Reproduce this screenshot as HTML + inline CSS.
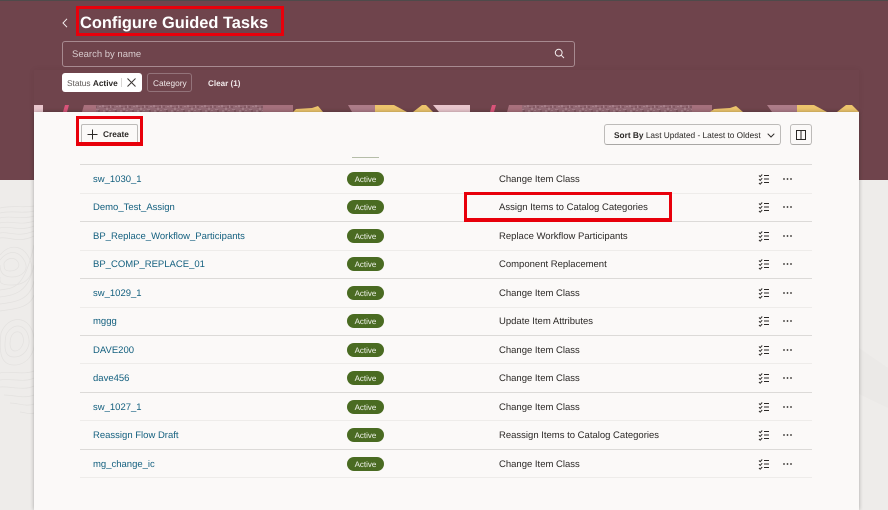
<!DOCTYPE html>
<html><head><meta charset="utf-8">
<style>
html,body{margin:0;padding:0;}
body{width:888px;height:510px;overflow:hidden;position:relative;background:#eeecea;font-family:"Liberation Sans",sans-serif;color:#2b2826;text-rendering:geometricPrecision;}
.a{position:absolute;white-space:nowrap;}
.hdr{left:0;top:0;width:888px;height:180px;background:#6f444c;}
.top{left:0;top:0;width:888px;height:1px;background:#4e4a4a;}
.card{left:34px;top:112px;width:825px;height:398px;background:#fbf9f8;box-shadow:0 0 4px rgba(0,0,0,.3);}
.shadow{left:34px;top:70px;width:825px;height:42px;box-shadow:0 0 6px rgba(60,20,30,.07);}
.line{left:80px;width:732px;height:1px;background:#eeecea;}
.line.d{background:#dcdad8;}
.n{left:93px;font-size:9.5px;color:#14607f;line-height:12px;}
.b{left:347px;width:37px;height:14px;border-radius:7px;background:#4a6b22;color:#f2f4ec;font-size:8px;line-height:15px;text-align:center;}
.t{left:499px;font-size:9.5px;line-height:14px;color:#2b2826;}
.red{border:3px solid #e8000b;box-sizing:border-box;}
svg{position:absolute;overflow:visible;}
</style></head><body>
<div class="a hdr"></div><div class="a top"></div>

<svg style="left:0;top:205px" width="34" height="220" viewBox="0 0 34 220" fill="none" stroke="#e3e1df" stroke-width=".7">
<path d="M0 3C12 0 24 3 34 1M0 8C12 5 24 9 34 6M0 13C10 10 22 15 34 11M0 18C10 15 20 21 34 16M0 23C8 20 20 27 34 21M0 28C8 26 18 33 34 26M0 33C8 31 18 39 34 31"/>
<path d="M0 55C8 45 18 45 24 55S22 72 12 72 0 66 0 60M0 50C10 38 24 40 30 55S26 80 12 80 0 76 0 72M4 58C8 52 15 52 18 57S16 66 10 66 4 63 4 58"/>
<path d="M0 85C12 83 24 86 34 40M0 92C12 90 28 90 34 60M0 99C14 97 30 96 34 76M0 106C14 104 30 103 34 90"/>
<path d="M6 130C12 118 24 118 28 130S24 152 14 152 4 142 6 130M11 132C14 125 21 125 23 132S20 146 15 146 9 139 11 132M1 128C8 110 28 110 33 128S28 160 14 160 -1 146 1 128"/>
<path d="M0 168C10 166 24 170 34 166M0 175C10 173 24 178 34 173M0 182C10 181 24 186 34 181M4 190C14 190 24 194 34 190M10 198C18 198 26 202 34 199M20 207C24 207 30 210 34 208"/>
</svg>
<svg style="left:859px;top:348px" width="29" height="60" viewBox="0 0 29 60"><path d="M0 0L29 20V60L0 46Z" fill="#ebe9e7"/></svg>

<div class="a shadow"></div>
<svg style="left:34px;top:105px" width="825" height="8" viewBox="0 0 825 8">
<defs>
<pattern id="nz" width="17" height="7" patternUnits="userSpaceOnUse">
<rect width="17" height="7" fill="#956a75"/>
<path d="M0 0h2v2H0zM4 3h2v2H4zM8 0h1v3H8zM11 4h3v1h-3zM14 1h2v1h-2zM1 5h2v2H1zM7 5h2v1H7z" fill="#a67f89"/>
<path d="M2 2h2v1H2zM6 1h2v2H6zM10 1h2v2h-2zM13 5h2v2h-2zM4 6h2v1H4z" fill="#835963"/>
</pattern>
</defs>
<path d="M0 0H9V7H0Z" fill="#e9c6cd"/>
<path d="M29 7L31 0H35L33 7Z" fill="#d9547a"/>
<path d="M48 7L50 0H64V7Z" fill="#a8707c"/>
<rect x="62" y="0" width="170" height="7" fill="url(#nz)"/>
<rect x="229" y="0" width="30" height="7" fill="#a5707c"/>
<path d="M259 7L262 4L278 3L284 1L289 7Z" fill="#ecc46c"/>
<path d="M314 0H341V7H318Z" fill="#ad7c88"/>
<path d="M341 0H360L373 7H341Z" fill="#ecc46c"/>
<path d="M379 7L388 0H392L399 7Z" fill="#ecc46c"/>
<path d="M399 0H436V7H405Z" fill="#e9c6cd"/>
<path d="M456 7L458 0H462L460 7Z" fill="#d9547a"/>
<path d="M473 7L475 0H490V7Z" fill="#a8707c"/>
<rect x="488" y="0" width="172" height="7" fill="url(#nz)"/>
<rect x="658" y="0" width="20" height="7" fill="#a5707c"/>
<path d="M676 7L680 4L696 3L702 1L709 7Z" fill="#ecc46c"/>
<path d="M733 0H763V7H738Z" fill="#ad7c88"/>
<path d="M763 0H780L793 7H763Z" fill="#ecc46c"/>
<path d="M803 7L812 0H818L825 7Z" fill="#ecc46c"/>
</svg>
<div class="a card"></div>

<svg style="left:62px;top:18px" width="6" height="10" viewBox="0 0 6 10" fill="none" stroke="#f4eeef" stroke-width="1"><path d="M5 .8L1 5l4 4.2"/></svg>
<div class="a red" style="left:76px;top:6px;width:208px;height:30px;"></div>
<div class="a" style="left:80px;top:12px;font-size:16.4px;line-height:23px;font-weight:700;color:#fff;">Configure Guided Tasks</div>

<div class="a" style="left:62px;top:41px;width:513px;height:26px;box-sizing:border-box;border:1px solid #a78a90;border-radius:3px;"></div>
<div class="a" style="left:72px;top:48px;font-size:9.5px;line-height:13px;color:#d9cccf;">Search by name</div>
<svg style="left:554px;top:48px" width="11" height="11" viewBox="0 0 11 11" fill="none" stroke="#f4eeef" stroke-width="1"><circle cx="4.7" cy="4.7" r="3.4"/><path d="M7.2 7.2L10 10"/></svg>

<div class="a" style="left:62px;top:73px;width:80px;height:19px;background:#fff;border-radius:3px;"></div>
<div class="a" style="left:67px;top:77px;font-size:8.3px;line-height:12px;color:#5b5654;">Status <b style="color:#2b2826">Active</b></div>
<div class="a" style="left:121px;top:78px;width:1px;height:9px;background:#d8d6d4;"></div>
<svg style="left:127px;top:78px" width="9" height="9" viewBox="0 0 9 9" fill="none" stroke="#3a3634" stroke-width="1"><path d="M.5.5l8 8M8.5.5l-8 8"/></svg>
<div class="a" style="left:147px;top:73px;width:45px;height:19px;box-sizing:border-box;border:1px solid #93737a;border-radius:3px;"></div>
<div class="a" style="left:153px;top:77px;font-size:8.3px;line-height:12px;color:#efe7e8;">Category</div>
<div class="a" style="left:208px;top:77px;font-size:8.1px;line-height:14px;font-weight:700;color:#efe7e8;">Clear (1)</div>

<div class="a" style="left:81px;top:124px;width:57px;height:20px;box-sizing:border-box;border:1px solid #bdbbb9;border-radius:2px;background:#fbf9f8;"></div>
<svg style="left:87px;top:129px" width="11" height="11" viewBox="0 0 11 11" fill="none" stroke="#2b2826" stroke-width="1"><path d="M5.5 .5v10M.5 5.5h10"/></svg>
<div class="a" style="left:103px;top:128px;font-size:8.3px;line-height:13px;font-weight:700;color:#2b2826;">Create</div>
<div class="a red" style="left:76px;top:116px;width:67px;height:30px;border-bottom-width:4px;"></div>

<div class="a" style="left:604px;top:124px;width:177px;height:21px;box-sizing:border-box;border:1px solid #bdbbb9;border-bottom-color:#a9a7a5;border-radius:3px;background:#fbf9f8;"></div>
<div class="a" style="left:614px;top:129px;font-size:8.3px;line-height:12px;color:#2b2826;"><b>Sort By</b> Last Updated - Latest to Oldest</div>
<svg style="left:767px;top:133px" width="8" height="5" viewBox="0 0 8 5" fill="none" stroke="#2b2826" stroke-width="1"><path d="M.7.7L4 4l3.3-3.3"/></svg>
<div class="a" style="left:790px;top:124px;width:22px;height:21px;box-sizing:border-box;border:1px solid #bdbbb9;border-bottom-color:#a9a7a5;border-radius:3px;background:#fbf9f8;"></div>
<svg style="left:796px;top:130px" width="10" height="10" viewBox="0 0 10 10" fill="none" stroke="#2b2826" stroke-width="1"><rect x=".5" y=".5" width="9" height="9"/><path d="M5 .5v9"/></svg>

<div class="a" style="left:352px;top:157px;width:27px;height:1px;background:#b5bda8;"></div>
<div class="a line d" style="top:164px"></div>
<div class="a line" style="top:193px"></div>
<div class="a line d" style="top:221px"></div>
<div class="a line" style="top:250px"></div>
<div class="a line d" style="top:278px"></div>
<div class="a line" style="top:307px"></div>
<div class="a line d" style="top:335px"></div>
<div class="a line" style="top:363px"></div>
<div class="a line d" style="top:392px"></div>
<div class="a line" style="top:420px"></div>
<div class="a line d" style="top:449px"></div>
<div class="a line" style="top:477px"></div>

<div class="a n" style="top:174px">sw_1030_1</div><div class="a b" style="top:172px">Active</div><div class="a t" style="top:173px">Change Item Class</div>
<div class="a n" style="top:202px">Demo_Test_Assign</div><div class="a b" style="top:200px">Active</div><div class="a t" style="top:201px">Assign Items to Catalog Categories</div>
<div class="a n" style="top:231px">BP_Replace_Workflow_Participants</div><div class="a b" style="top:229px">Active</div><div class="a t" style="top:230px">Replace Workflow Participants</div>
<div class="a n" style="top:259px">BP_COMP_REPLACE_01</div><div class="a b" style="top:257px">Active</div><div class="a t" style="top:258px">Component Replacement</div>
<div class="a n" style="top:288px">sw_1029_1</div><div class="a b" style="top:286px">Active</div><div class="a t" style="top:287px">Change Item Class</div>
<div class="a n" style="top:316px">mggg</div><div class="a b" style="top:314px">Active</div><div class="a t" style="top:315px">Update Item Attributes</div>
<div class="a n" style="top:345px">DAVE200</div><div class="a b" style="top:343px">Active</div><div class="a t" style="top:344px">Change Item Class</div>
<div class="a n" style="top:373px">dave456</div><div class="a b" style="top:371px">Active</div><div class="a t" style="top:372px">Change Item Class</div>
<div class="a n" style="top:402px">sw_1027_1</div><div class="a b" style="top:400px">Active</div><div class="a t" style="top:401px">Change Item Class</div>
<div class="a n" style="top:430px">Reassign Flow Draft</div><div class="a b" style="top:428px">Active</div><div class="a t" style="top:429px">Reassign Items to Catalog Categories</div>
<div class="a n" style="top:459px">mg_change_ic</div><div class="a b" style="top:457px">Active</div><div class="a t" style="top:458px">Change Item Class</div>

<svg style="left:0;top:0" width="888" height="510">
<defs>
<g id="ic" fill="none" stroke="#2b2826" stroke-width="1">
<path d="M759 175.5l1.2 1.2 2-2.2M759 179.2l1.2 1.2 2-2.2M759 183l1.2 1.2 2-2.2"/>
<path d="M764 175.5h5M764 179h5M764 182.5h5"/>
<circle cx="784" cy="179" r=".9" fill="#2b2826" stroke="none"/><circle cx="787.5" cy="179" r=".9" fill="#2b2826" stroke="none"/><circle cx="791" cy="179" r=".9" fill="#2b2826" stroke="none"/>
</g>
</defs>
<use href="#ic"/>
<use href="#ic" y="28"/>
<use href="#ic" y="57"/>
<use href="#ic" y="85"/>
<use href="#ic" y="114"/>
<use href="#ic" y="142"/>
<use href="#ic" y="171"/>
<use href="#ic" y="199"/>
<use href="#ic" y="228"/>
<use href="#ic" y="256"/>
<use href="#ic" y="285"/>
</svg>

<div class="a red" style="left:464px;top:192px;width:208px;height:30px;border-bottom-width:4px;"></div>
</body></html>
